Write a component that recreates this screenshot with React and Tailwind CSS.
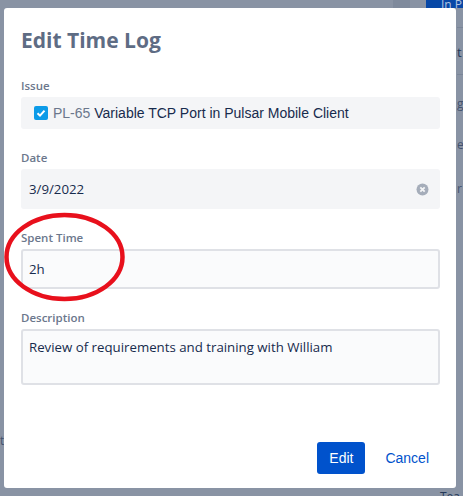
import React from 'react';

const labelClass = "h-[24px] flex items-end pb-[3px] text-[11.5px] font-semibold text-[#6b778c] leading-4";
const fieldFont = { fontFamily: '"Open Sans", sans-serif' };
const arial = { fontFamily: '"Liberation Sans", sans-serif' };

const App = () => {
  return (
    <div className="relative w-[463px] h-[496px] overflow-hidden bg-[#8993a4] pt-[8px] pl-[4px]" style={fieldFont}>
      {/* page behind the modal */}
      <div className="absolute top-0 left-[426px] w-[37px] h-[8px] bg-[#0747a6] overflow-hidden pl-[15px] text-[12px] leading-[10px] text-[#b3c5e0]">In P</div>
      <div className="absolute top-0 left-[393px] w-[17px] h-[8px] bg-[#7f8a9c]"></div>
      <div className="absolute top-[27px] left-[457px] w-[6px] h-px bg-[#7a8598]"></div>
      <div className="absolute top-[74px] left-[457px] w-[6px] h-px bg-[#7a8598]"></div>
      <div className="absolute top-[44px] left-[457px] text-[13px] leading-4 text-[#253858]">t</div>
      <div className="absolute top-[96px] left-[457px] text-[12px] leading-4 text-[#42526e]">g</div>
      <div className="absolute top-[137px] left-[457px] text-[12px] leading-4 text-[#42526e]">e</div>
      <div className="absolute top-[181px] left-[457px] text-[12px] leading-4 text-[#42526e]">r</div>
      <div className="absolute top-[433px] left-0 text-[12px] leading-4 text-[#42526e]">t</div>
      <div className="absolute top-[489px] left-[440px] text-[12px] leading-4 text-[#253858]">Tea</div>

      <div className="relative w-[452px] h-[480px] rounded-[3px] bg-white pl-[17px] pr-[16px] flex flex-col">
        <h1 className="h-[65px] pt-[17px] text-[21px] leading-[30px] font-bold text-[#5e6c84]">Edit Time Log</h1>

        <label className={labelClass}>Issue</label>
        <div className="h-[32px] rounded-[3px] bg-[#f4f5f7] flex items-center pl-[13px]">
          <span className="w-[14px] h-[14px] rounded-[2px] bg-[#0c9be8] flex items-center justify-center">
            <svg width="10" height="10" viewBox="0 0 10 10" fill="none">
              <path d="M1.5 5.2 L4 7.6 L8.5 2.6" stroke="white" strokeWidth="2" />
            </svg>
          </span>
          <span className="ml-[5px] text-[14px] text-[#172b4d]" style={arial}>
            <span className="text-[#6b778c]">PL-65</span> Variable TCP Port in Pulsar Mobile Client
          </span>
        </div>

        <label className={`${labelClass} mt-[16px]`}>Date</label>
        <div className="h-[40px] rounded-[3px] bg-[#f4f5f7] flex items-center justify-between pl-[8px] pr-[11px] text-[13.25px] text-[#172b4d]">
          <span className="pt-[2px]">3/9/2022</span>
          <svg width="13" height="13" viewBox="0 0 13 13">
            <circle cx="6.5" cy="6.5" r="6" fill="#a5adba" />
            <path d="M4.3 4.3 L8.7 8.7 M8.7 4.3 L4.3 8.7" stroke="#f4f5f7" strokeWidth="1.8" />
          </svg>
        </div>

        <label className={`${labelClass} mt-[16px]`}>Spent Time</label>
        <div className="h-[40px] rounded-[3px] bg-[#fafbfc] border-2 border-[#dfe1e6] flex items-center pl-[6px] pt-[2px] text-[13.25px] text-[#172b4d]">
          2h
        </div>

        <label className={`${labelClass} mt-[16px]`}>Description</label>
        <div className="h-[56px] rounded-[3px] bg-[#fafbfc] border-2 border-[#dfe1e6] pl-[6px] pt-[6px] text-[13.25px] leading-5 text-[#172b4d]">
          Review of requirements and training with William
        </div>

        <div className="flex justify-end items-center mt-[57px] pr-[11px]">
          <button className="w-[48px] h-[32px] rounded-[3px] bg-[#0052cc] text-white text-[14px]" style={arial}>Edit</button>
          <button className="ml-[20px] text-[#0052cc] text-[14px]" style={arial}>Cancel</button>
        </div>
      </div>

      {/* red marker circle drawn over the screenshot */}
      <svg className="absolute top-[208px] left-0" width="132" height="98" viewBox="0 0 132 98" fill="none">
        <ellipse cx="64.5" cy="49" rx="58" ry="42" stroke="#e8101c" strokeWidth="4.5" />
      </svg>
    </div>
  );
};

export default App;
